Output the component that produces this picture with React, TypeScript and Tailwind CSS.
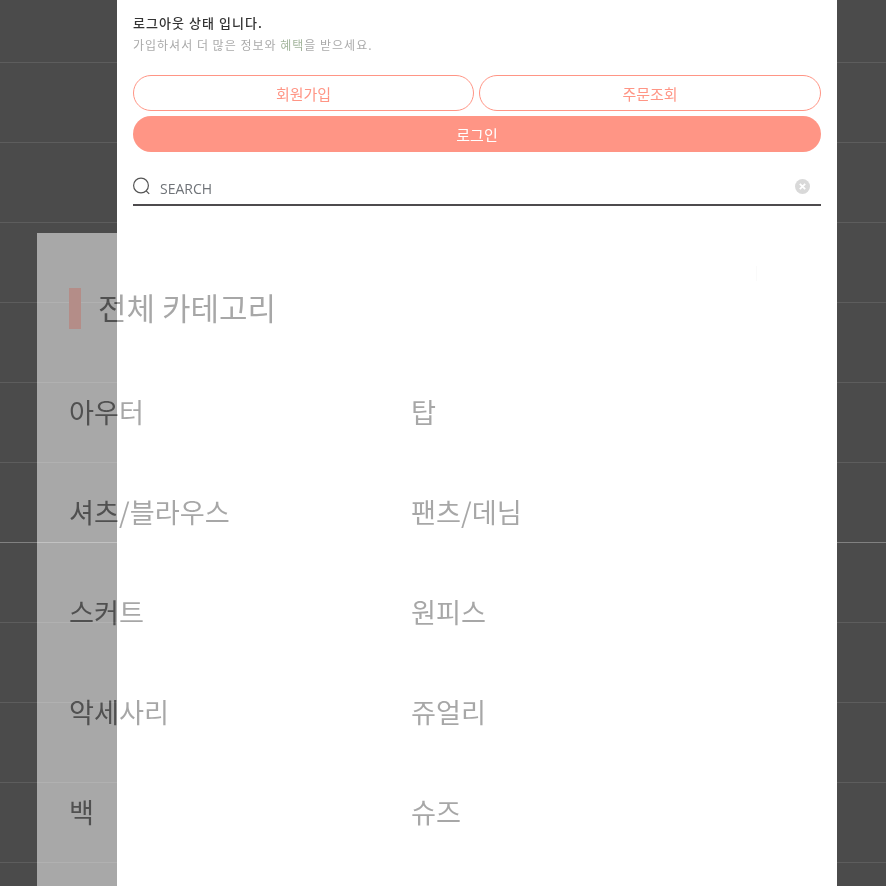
import React from 'react';

const categories = ['아우터', '탑', '셔츠/블라우스', '팬츠/데님', '스커트', '원피스', '악세사리', '쥬얼리', '백', '슈즈'];
const rows = [...Array(11)].map((_, i) => i);

const App: React.FC = () => {
  return (
    <div className="relative isolate h-[886px] w-[886px] overflow-hidden bg-[#4b4b4b] font-['Noto_Sans_CJK_KR','Noto_Sans',sans-serif]">
      {/* 뒤쪽 페이지 */}
      <div className="absolute left-[37px] top-[233px] h-[653px] w-[200px] bg-[#a8a8a8]" />

      {/* 가로줄 */}
      <div className="absolute inset-x-0 top-[-17px] flex flex-col">
        {rows.map((i) => (
          <div key={i} className={`h-[80px] border-b ${i === 6 ? 'border-white/30' : 'border-white/10'}`} />
        ))}
      </div>

      {/* 드로어 */}
      <div className="absolute bottom-0 left-[117px] top-0 w-[720px] bg-white px-4">
        <p className="mt-[13px] text-[13px] font-medium leading-[20px] tracking-[1.05px] text-[#333333]">로그아웃 상태 입니다.</p>
        <p className="mt-[2px] text-[12px] leading-[20px] tracking-[1px] text-[#aaaaaa]">
          가입하셔서 더 많은 정보와 <span className="text-[#a3b59c]">혜택</span>을 받으세요.
        </p>

        <div className="mt-[20px] grid grid-cols-[341px_1fr] gap-[5px]">
          <button className="h-[36px] rounded-full border border-[#ff9585] pt-[2px] text-[15px] text-[#ff9585]">회원가입</button>
          <button className="h-[36px] rounded-full border border-[#ff9585] pt-[2px] text-[15px] text-[#ff9585]">주문조회</button>
          <button className="col-span-2 h-[36px] rounded-full bg-[#ff9585] pt-[2px] text-[15px] text-white">로그인</button>
        </div>

        <div className="mt-[20px] flex h-[34px] items-center border-b-2 border-[#4d4b4d] pb-[2px]">
          <svg width="19" height="19" viewBox="0 0 19 19" fill="none" stroke="#555555" strokeWidth="1.2" className="mb-[2px] ml-[-1px] shrink-0">
            <circle cx="9" cy="8.5" r="7.4" />
            <path d="M14.2 13.8l3 3" />
          </svg>
          <span className="ml-[9px] flex-1 pt-[2px] font-['Open_Sans',sans-serif] text-[14px] text-[#6f7378]">SEARCH</span>
          <svg width="15" height="15" viewBox="0 0 15 15" className="mb-[2px] mr-[11px] shrink-0">
            <circle cx="7.5" cy="7.5" r="7.5" fill="#d9d9d9" />
            <path d="M4.8 4.8l5.4 5.4M10.2 4.8l-5.4 5.4" stroke="#ffffff" strokeWidth="1.8" />
          </svg>
        </div>

        <div className="ml-[623px] mt-[60px] h-[15px] w-px bg-[#fafafa]" />
      </div>

      {/* 카테고리: 드로어 뒤로 비치는 글자 */}
      <div className="absolute left-[37px] top-[233px] w-[720px] pl-[32px]">
        <div className="mt-[55px] flex items-center">
          <div className="h-[41px] w-[12px] bg-[#b48d88]" />
          <h2 className="ml-[17px] mt-[-4px] text-[31px] leading-[41px] text-[#585858] mix-blend-difference">전체 카테고리</h2>
        </div>
        <div className="mt-[32px] grid grid-cols-[342px_1fr]">
          {categories.map((name) => (
            <div key={name} className="flex h-[100px] items-center text-[27.2px] text-[#585858] mix-blend-difference">
              {name}
            </div>
          ))}
        </div>
      </div>
    </div>
  );
};

export default App;
